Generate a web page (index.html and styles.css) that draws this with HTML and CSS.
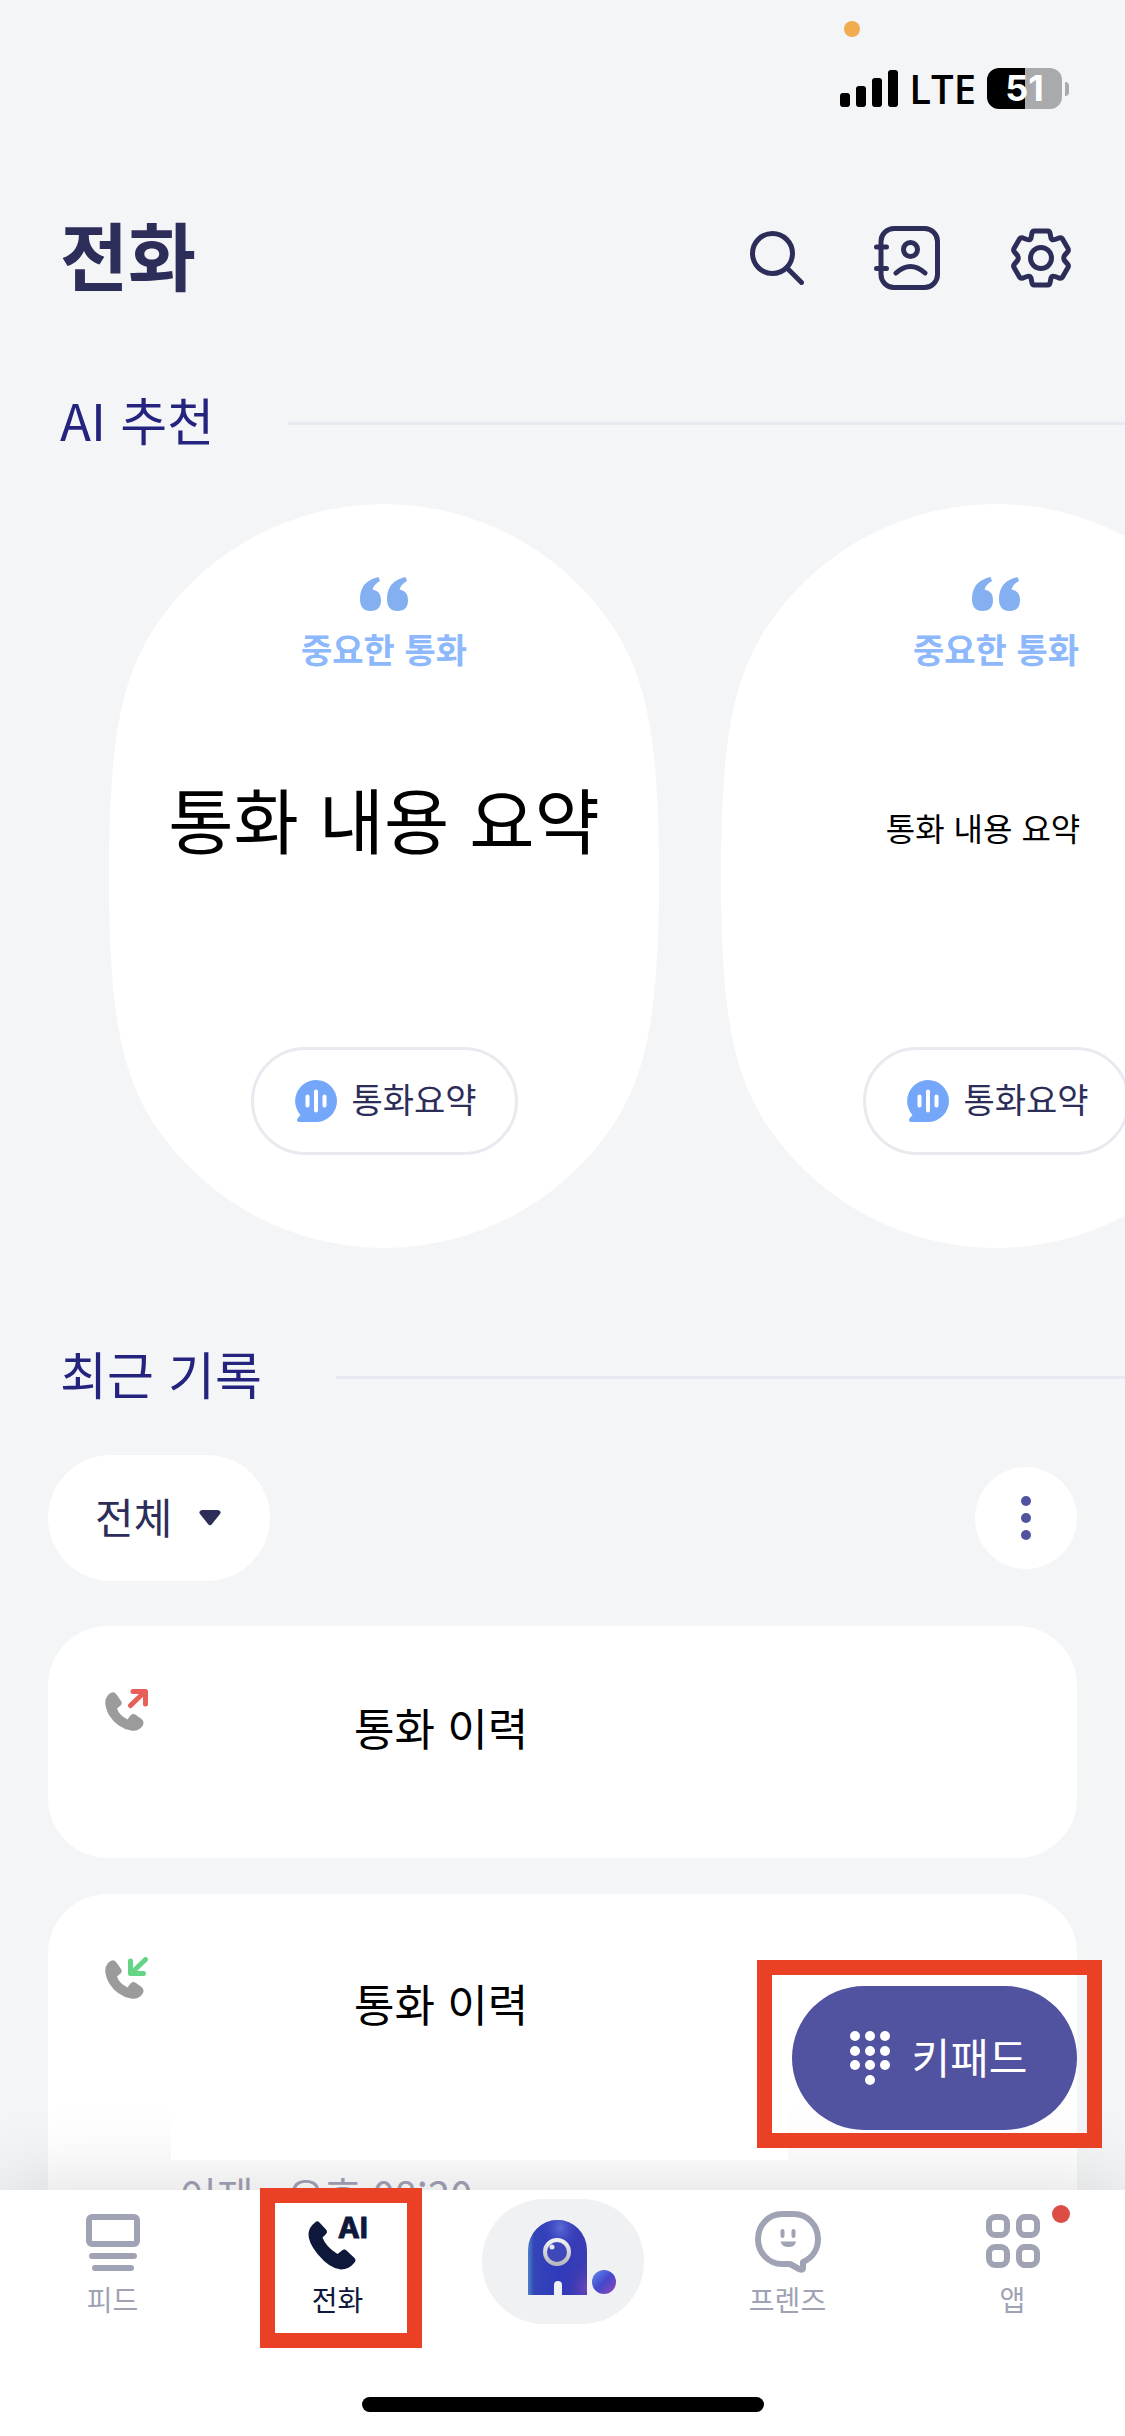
FILE: index.html
```html
<!DOCTYPE html>
<html lang="ko">
<head>
<meta charset="utf-8">
<meta name="viewport" content="width=device-width, initial-scale=1">
<title>전화</title>
<link rel="stylesheet" href="styles.css">
</head>
<body>
<svg class="defs" aria-hidden="true">
  <symbol id="quote" viewBox="0 0 48 34">
    <path d="M18.500 0L20 4Q14 7 12.500 12.500Q21 14 21 23Q21 34 10.500 34Q0 34 0 22Q0 4 18.500 0Z"/>
    <path d="M45.500 0L47 4Q41 7 39.500 12.500Q48 14 48 23Q48 34 37.500 34Q27 34 27 22Q27 4 45.500 0Z"/>
  </symbol>
  <symbol id="voice" viewBox="0 0 42 42">
    <path fill="#74a7fa" d="M21 0A21 21 0 0 1 21 42H4Q1 41.500 2.500 38.500L5.500 35A21 21 0 0 1 21 0Z"/>
    <path stroke="#fff" stroke-width="4" stroke-linecap="round" d="M21 11.500V30.500M12.500 16.500V25.500M29.500 16.500V25.500"/>
  </symbol>
  <symbol id="handset" viewBox="0 0 43 43">
    <path fill="#9b9b9b" d="M3 6Q8 1 11.500 5.500L16 12Q18 15 15 17L12 19.500Q14 26 22.500 30.500L25 27Q27.500 23.500 31 26L36.500 30Q40 33 37.500 37Q33 43 26 41.500Q12 39 4 26Q-3 13 3 6Z"/>
  </symbol>
</svg>

<div class="screen">
  <div class="status">
    <span class="status-dot"></span>
    <div class="status-row">
      <svg width="58" height="37" viewBox="0 0 58 37" aria-hidden="true">
        <rect x="0" y="23" width="10" height="14" rx="3"/>
        <rect x="16" y="16" width="10" height="21" rx="3"/>
        <rect x="32" y="8" width="10" height="29" rx="3"/>
        <rect x="48" y="0" width="10" height="37" rx="3"/>
      </svg>
      <span class="network">LTE</span>
      <div class="battery">
        <span class="battery-body">51</span>
        <span class="battery-cap"></span>
      </div>
    </div>
  </div>

  <header class="header">
    <h1>전화</h1>
    <div class="header-actions">
      <button class="icon-button" type="button" aria-label="검색">
        <svg width="54" height="54" viewBox="0 0 54 54"><circle cx="22.500" cy="22.500" r="20"/><path d="M37 37L51.500 51.500"/></svg>
      </button>
      <button class="icon-button" type="button" aria-label="연락처">
        <svg width="70" height="64" viewBox="0 0 70 64"><rect x="7" y="2.500" width="56.500" height="59" rx="13"/><path d="M2.500 21H12.500M2.500 42.500H12.500M22 47Q36.500 34 51 47"/><circle cx="36.500" cy="23.500" r="7"/></svg>
      </button>
      <button class="icon-button" type="button" aria-label="설정">
        <svg width="60" height="60" viewBox="0 0 60 60"><path d="M23 3H37Q38.500 3 39 5L40 10Q41 12.500 44 11.500L48 10Q50.500 9.500 51.500 11L57 20.500Q58 22.500 56.500 24L53.500 27.500Q52 30 53.500 32.500L56.500 36Q58 37.500 57 39.500L51.500 49Q50.500 50.500 48 50L44 48.500Q41 47.500 40 50L39 55Q38.500 57 37 57H23Q21.500 57 21 55L20 50Q19 47.500 16 48.500L12 50Q9.500 50.500 8.500 49L3 39.500Q2 37.500 3.500 36L6.500 32.500Q8 30 6.500 27.500L3.500 24Q2 22.500 3 20.500L8.500 11Q9.500 9.500 12 10L16 11.500Q19 12.500 20 10L21 5Q21.500 3 23 3Z"/><circle cx="30" cy="30" r="10.500"/></svg>
      </button>
    </div>
  </header>

  <main>
    <section>
      <h2 class="section-title">AI 추천</h2>
      <div class="carousel">
        <article class="summary">
          <svg class="quote" width="48" height="34"><use href="#quote"/></svg>
          <p class="summary-kind">중요한 통화</p>
          <p class="summary-text">통화 내용 요약</p>
          <button class="summary-button" type="button"><svg width="42" height="42"><use href="#voice"/></svg><span>통화요약</span></button>
        </article>
        <article class="summary">
          <svg class="quote" width="48" height="34"><use href="#quote"/></svg>
          <p class="summary-kind">중요한 통화</p>
          <p class="summary-text summary-text-small">통화 내용 요약</p>
          <button class="summary-button" type="button"><svg width="42" height="42"><use href="#voice"/></svg><span>통화요약</span></button>
        </article>
      </div>
    </section>

    <section class="recent">
      <h2 class="section-title">최근 기록</h2>
      <div class="toolbar">
        <div class="filter">
          <select aria-label="기록 필터"><option>전체</option></select>
          <svg width="22" height="16" viewBox="0 0 22 16" aria-hidden="true"><path d="M3 0H19Q23 1 21 4L13 14Q11 16.500 9 14L1 4Q-1 1 3 0Z"/></svg>
        </div>
        <button class="more" type="button" aria-label="더보기">
          <svg width="10" height="44" viewBox="0 0 10 44"><circle cx="5" cy="5" r="5"/><circle cx="5" cy="22" r="5"/><circle cx="5" cy="39" r="5"/></svg>
        </button>
      </div>
      <ul class="calls">
        <li class="call">
          <svg class="call-icon" width="43" height="43" viewBox="0 0 43 43"><use href="#handset"/><path class="call-out" d="M25.500 16.500L39 3.500M28 2.500H40.500V15"/></svg>
          <div class="call-body"><p class="call-name">통화 이력</p></div>
        </li>
        <li class="call">
          <svg class="call-icon" width="43" height="43" viewBox="0 0 43 43"><use href="#handset"/><path class="call-in" d="M40.500 2.500L27 15.500M25.500 4V16.500H38.500"/></svg>
          <div class="call-body"><p class="call-name">통화 이력</p></div>
          <p class="call-time"><span>어제</span><span>오후 08:20</span></p>
        </li>
      </ul>
    </section>
  </main>
</div>

<div class="shade"></div>

<button class="keypad" type="button">
  <svg width="40" height="54" viewBox="0 0 40 54" aria-hidden="true"><circle cx="5" cy="5" r="5"/><circle cx="20" cy="5" r="5"/><circle cx="35" cy="5" r="5"/><circle cx="5" cy="20" r="5"/><circle cx="20" cy="20" r="5"/><circle cx="35" cy="20" r="5"/><circle cx="5" cy="34" r="5"/><circle cx="20" cy="34" r="5"/><circle cx="35" cy="34" r="5"/><circle cx="20" cy="49" r="5"/></svg>
  <span>키패드</span>
</button>

<nav class="tabs">
  <a class="tab" href="#feed">
    <svg width="54" height="64" viewBox="0 0 54 64"><rect x="3" y="7" width="48" height="27" rx="3" fill="none" stroke="currentColor" stroke-width="6"/><path fill="none" stroke="currentColor" stroke-width="6" stroke-linecap="round" d="M6 46H48M9 58H45"/></svg>
    피드
  </a>
  <a class="tab tab-current" href="#phone" aria-current="page">
    <svg width="60" height="64" viewBox="0 -7 60 64"><path fill="currentColor" d="M6.500 6Q9 3 11.500 5.500L18 12.500Q20 15 18 17L14.500 20.500Q18 30 29.500 37L34 33.500Q36.500 31.500 39 34L46.500 41Q48.500 43.500 46.500 45.500Q41 52.500 33 52.500Q22 52 9.500 37Q0 25 .5 17Q1 10 6.500 6Z"/><text class="tab-ai" x="30" y="21">AI</text></svg>
    전화
  </a>
  <a class="assistant" href="#assistant" aria-label="에이닷">
    <svg width="88" height="76" viewBox="0 0 88 76">
      <defs>
        <linearGradient id="body" x1="0" y1="0" x2="1" y2="0"><stop offset="0" stop-color="#4a80c8"/><stop offset=".1" stop-color="#3445b8"/><stop offset=".5" stop-color="#2f3abb"/><stop offset="1" stop-color="#3c3cb4"/></linearGradient>
        <radialGradient id="shine" cx=".55" cy=".1" r=".35"><stop offset="0" stop-color="#5f6cd4"/><stop offset="1" stop-color="#3440c0" stop-opacity="0"/></radialGradient>
        <radialGradient id="glow" cx="1" cy=".9" r=".35"><stop offset="0" stop-color="#7046b8"/><stop offset="1" stop-color="#4038b4" stop-opacity="0"/></radialGradient>
        <linearGradient id="ring" x1="0" y1="0" x2="0" y2="1"><stop offset="0" stop-color="#f2f2f2"/><stop offset="1" stop-color="#b9b9bf"/></linearGradient>
        <linearGradient id="ball" x1=".1" y1=".1" x2=".9" y2=".9"><stop offset="0" stop-color="#5a80e4"/><stop offset=".5" stop-color="#4448cc"/><stop offset="1" stop-color="#8448b8"/></linearGradient>
      </defs>
      <path fill="url(#body)" d="M0 30A29.500 30 0 0 1 59 30V75H34V65Q34 61 30 61T26 65V75H0Z"/>
      <path fill="url(#shine)" d="M0 30A29.500 30 0 0 1 59 30V75H34V65Q34 61 30 61T26 65V75H0Z"/>
      <path fill="url(#glow)" d="M0 30A29.500 30 0 0 1 59 30V75H34V65Q34 61 30 61T26 65V75H0Z"/>
      <circle cx="29" cy="32" r="12" fill="#3f48b8" stroke="url(#ring)" stroke-width="4"/>
      <circle cx="24" cy="27" r="2.500" fill="#e6e8f8"/>
      <circle cx="76" cy="62" r="12" fill="url(#ball)"/>
    </svg>
  </a>
  <a class="tab" href="#friends">
    <svg width="66" height="64" viewBox="0 0 66 64"><path fill="none" stroke="currentColor" stroke-width="6" stroke-linejoin="round" d="M27 4H39C52 4 63 15 63 29C63 40 57 48 48 52V58Q48 60.500 45 59.500L35 54H27C14 54 3 43 3 29S14 4 27 4Z"/><path fill="none" stroke="currentColor" stroke-width="4" stroke-linecap="round" d="M27.500 21V26M38.500 21V26"/><path fill="currentColor" d="M25.500 31.500H41Q40 37 33.500 37T25.500 31.500Z"/></svg>
    프렌즈
  </a>
  <a class="tab" href="#apps">
    <svg width="54" height="64" viewBox="0 0 54 64"><g fill="none" stroke="currentColor" stroke-width="6"><rect x="3" y="7" width="18" height="18" rx="6"/><rect x="33" y="7" width="18" height="18" rx="6"/><rect x="3" y="37" width="18" height="18" rx="6"/><rect x="33" y="37" width="18" height="18" rx="6"/></g></svg>
    앱
    <span class="tab-badge"></span>
  </a>
  <span class="home-bar"></span>
</nav>
</body>
</html>
```
FILE: styles.css
```css
* {
  box-sizing: border-box;
}

body {
  display: flex;
  flex-direction: column;
  height: 100vh;
  margin: 0;
  background: #f4f5f7;
  color: #000;
  font-family: "Noto Sans CJK KR", "Noto Sans", sans-serif;
}

h1,
h2,
p,
ul {
  margin: 0;
  padding: 0;
}

button,
select {
  margin: 0;
  padding: 0;
  border: 0;
  color: inherit;
  font: inherit;
}

svg {
  display: block;
  flex: none;
}

.defs {
  position: absolute;
  width: 0;
  height: 0;
}

.screen {
  flex: 1;
  min-height: 0;
  overflow: hidden;
}

/* Status bar */
.status {
  display: flex;
  flex-direction: column;
  align-items: flex-end;
  gap: 31px;
  padding: 21px 56px 0 0;
}

.status-dot {
  width: 16px;
  height: 16px;
  margin-right: 209px;
  border-radius: 50%;
  background: #f0ac4e;
}

.status-row {
  display: flex;
  align-items: center;
  gap: 11px;
  height: 41px;
}

.network {
  font-family: "Open Sans", sans-serif;
  font-size: 40px;
  font-weight: 600;
  line-height: 41px;
}

.battery {
  display: flex;
  align-items: center;
  gap: 3px;
}

.battery-body {
  width: 75px;
  border-radius: 12px;
  background: linear-gradient(90deg, #000 51%, #a9aaac 51%);
  color: #fff;
  font-family: Inter, sans-serif;
  font-size: 36px;
  font-weight: 700;
  line-height: 41px;
  text-align: center;
}

.battery-cap {
  width: 4px;
  height: 14px;
  border-radius: 0 8px 8px 0;
  background: #a9aaac;
}

/* Header */
.header {
  display: flex;
  align-items: center;
  justify-content: space-between;
  height: 128px;
  margin-top: 85px;
  padding: 0 48px 0 60px;
  color: #2d2d5a;
}

h1 {
  padding-bottom: 10px;
  font-size: 74px;
  font-weight: 700;
  line-height: 108px;
}

.header-actions {
  display: flex;
  gap: 60px;
}

.icon-button {
  display: grid;
  place-items: center;
  width: 72px;
  height: 72px;
  background: none;
}

.icon-button svg {
  fill: none;
  stroke: currentColor;
  stroke-width: 5;
  stroke-linecap: round;
  stroke-linejoin: round;
}

/* Sections */
.section-title {
  display: flex;
  align-items: center;
  gap: 74px;
  margin-top: 61px;
  padding: 0 0 8px 60px;
  color: #24247f;
  font-size: 51px;
  font-weight: 400;
  line-height: 72px;
}

.section-title::after {
  flex: 1;
  height: 3px;
  margin-top: 8px;
  background: #e8eaf1;
  content: "";
}

.recent .section-title {
  margin-top: 89px;
}

.carousel {
  display: flex;
  gap: 62px;
  margin-top: 41px;
  padding-left: 109px;
  overflow: hidden;
}

.summary {
  display: flex;
  flex: none;
  flex-direction: column;
  align-items: center;
  width: 550px;
  height: 744px;
  padding: 73px 0 93px;
  background: url("data:image/svg+xml,%3Csvg xmlns='http://www.w3.org/2000/svg' viewBox='0 0 550 744'%3E%3Cpath fill='%23fff' d='M275 0A275 275 0 0 1 500 117C538 171 550 235 550 372S538 573 500 627A275 275 0 0 1 50 627C12 573 0 509 0 372S12 171 50 117A275 275 0 0 1 275 0Z'/%3E%3C/svg%3E") center / 100% 100% no-repeat;
}

.quote {
  fill: #84aff0;
}

.summary-kind {
  margin-top: 13px;
  color: #8db8fb;
  font-size: 34px;
  font-weight: 700;
  line-height: 50px;
}

.summary-text {
  display: flex;
  flex: 1;
  align-items: center;
  padding-bottom: 88px;
  font-size: 71px;
  line-height: 100px;
}

.summary-text-small {
  padding: 0 26px 68px 0;
  font-size: 32px;
}

.summary-button {
  display: flex;
  align-items: center;
  justify-content: center;
  gap: 14px;
  width: 267px;
  height: 108px;
  padding-left: 4px;
  border: 3px solid #e9e9f0;
  border-radius: 54px;
  background: #fff;
  color: #2d2d5a;
  font-size: 34px;
}

.summary-button span,
.keypad span {
  padding-bottom: 5px;
}

/* Recent calls */
.toolbar {
  display: flex;
  align-items: center;
  justify-content: space-between;
  margin-top: 38px;
  padding: 0 48px;
  color: #2d2d5a;
}

.filter {
  display: grid;
  align-items: center;
}

.filter select,
.filter svg {
  grid-area: 1 / 1;
}

.filter select {
  height: 126px;
  padding: 0 97px 5px 47px;
  border-radius: 63px;
  appearance: none;
  background: #fff;
  font-size: 42px;
}

.filter svg {
  justify-self: end;
  margin-right: 49px;
  fill: currentColor;
  pointer-events: none;
}

.more {
  display: grid;
  place-items: center;
  width: 102px;
  height: 102px;
  border-radius: 50%;
  background: #fff;
  fill: #5253a0;
}

.calls {
  display: flex;
  flex-direction: column;
  gap: 36px;
  margin-top: 45px;
  padding: 0 48px;
  list-style: none;
}

.call {
  display: grid;
  grid-template-columns: 66px 617px;
  min-height: 232px;
  padding: 0 57px;
  border-radius: 60px;
  background: #fff;
}

.call-icon {
  margin-top: 63px;
  fill: none;
  stroke-width: 5;
  stroke-linecap: round;
  stroke-linejoin: round;
}

.call-out {
  stroke: #e75f59;
}

.call-in {
  stroke: #65d585;
}

.call-body {
  padding: 69px 0 0 183px;
}

.call-name {
  font-size: 44px;
  line-height: 64px;
}

.call:last-child .call-body {
  position: relative;
  z-index: 2;
  height: 266px;
  padding-top: 77px;
  background: #fff;
}

.call-time {
  display: flex;
  grid-column: 2;
  gap: 34px;
  padding: 6px 0 60px 9px;
  color: #a3a3b8;
  font-size: 40px;
  line-height: 56px;
}

/* Soft shadow that the tab bar casts on the list */
.shade {
  position: fixed;
  z-index: 1;
  right: 0;
  bottom: 0;
  left: 0;
  height: 246px;
  box-shadow: 0 0 80px rgba(0, 0, 0, 0.15);
}

.keypad {
  position: fixed;
  z-index: 3;
  right: 48px;
  bottom: 306px;
  display: flex;
  align-items: center;
  justify-content: center;
  gap: 22px;
  width: 285px;
  height: 144px;
  padding-left: 8px;
  border-radius: 72px;
  background: #5253a0;
  color: #fff;
  fill: #fff;
  font-size: 42px;
}

/* Red callout frames */
.keypad::after,
.tab-current::after {
  position: absolute;
  border: 15px solid #ea4025;
  content: "";
  pointer-events: none;
}

.keypad::after {
  inset: -26px -25px -18px -35px;
}

.tab-current::after {
  inset: -2px 28px 88px 35px;
}

/* Tab bar */
.tabs {
  position: relative;
  z-index: 4;
  display: grid;
  flex: none;
  grid-template-columns: repeat(5, 1fr);
  height: 246px;
  background: #fff;
}

.tab {
  position: relative;
  display: flex;
  flex-direction: column;
  align-items: center;
  gap: 5px;
  padding-top: 20px;
  color: #a0a3b3;
  font-size: 28px;
  line-height: 40px;
  text-decoration: none;
}

.tab-current {
  color: #0d183b;
}

.tab-ai {
  fill: currentColor;
  stroke: currentColor;
  stroke-width: 1;
  stroke-linejoin: round;
  font-family: Inter, sans-serif;
  font-size: 29px;
  font-weight: 700;
}

.tab-badge {
  position: absolute;
  top: 15px;
  right: 55px;
  width: 18px;
  height: 18px;
  border-radius: 50%;
  background: #dd4c45;
}

.assistant {
  display: flex;
  justify-self: center;
  width: 162px;
  height: 125px;
  margin-top: 9px;
  padding: 21px 0 0 46px;
  border-radius: 62px;
  background: #f0f1f3;
}

.home-bar {
  position: absolute;
  bottom: 24px;
  left: 50%;
  width: 402px;
  height: 15px;
  margin-left: -201px;
  border-radius: 8px;
  background: #000;
}
```
